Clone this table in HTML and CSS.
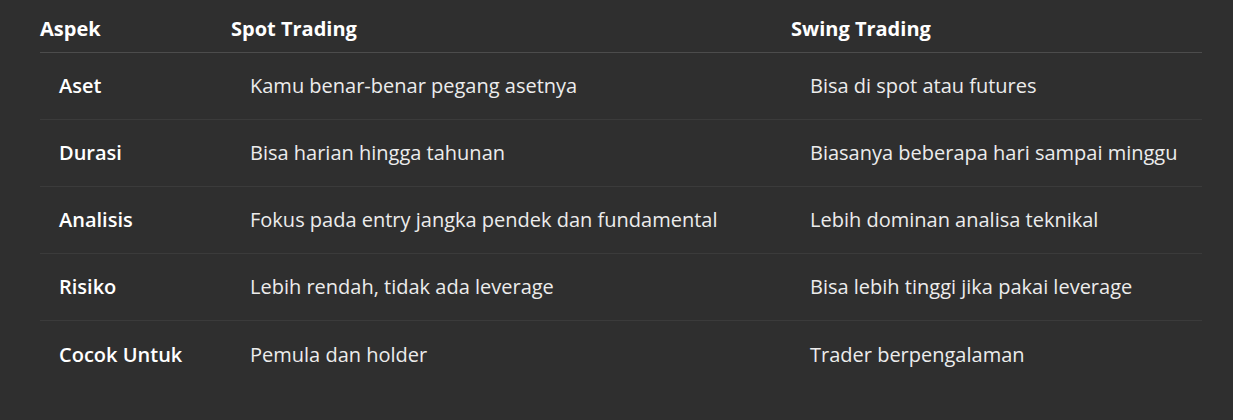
FILE: index.html
```html
<!DOCTYPE html>
<html>
<head>
<meta charset="utf-8">
<link rel="stylesheet" href="styles.css">
</head>
<body>
<div class="table">
  <div class="row head">
    <div class="c1">Aspek</div>
    <div class="c2">Spot Trading</div>
    <div class="c3">Swing Trading</div>
  </div>
  <div class="row">
    <div class="c1">Aset</div>
    <div class="c2">Kamu benar-benar pegang asetnya</div>
    <div class="c3">Bisa di spot atau futures</div>
  </div>
  <div class="row">
    <div class="c1">Durasi</div>
    <div class="c2">Bisa harian hingga tahunan</div>
    <div class="c3">Biasanya beberapa hari sampai minggu</div>
  </div>
  <div class="row">
    <div class="c1">Analisis</div>
    <div class="c2">Fokus pada entry jangka pendek dan fundamental</div>
    <div class="c3">Lebih dominan analisa teknikal</div>
  </div>
  <div class="row">
    <div class="c1">Risiko</div>
    <div class="c2">Lebih rendah, tidak ada leverage</div>
    <div class="c3">Bisa lebih tinggi jika pakai leverage</div>
  </div>
  <div class="row last">
    <div class="c1">Cocok Untuk</div>
    <div class="c2">Pemula dan holder</div>
    <div class="c3">Trader berpengalaman</div>
  </div>
</div>
</body>
</html>
```

FILE: styles.css
```css
html, body {
  margin: 0;
  background: #2f2f2f;
}
body {
  font-family: "Open Sans", "Noto Sans", sans-serif;
  font-size: 20px;
  line-height: 28px;
  color: #ececec;
  padding: 0 31px 0 40px;
}
.table {
  display: flex;
  flex-direction: column;
}
.row {
  display: flex;
  align-items: center;
  height: 67px;
  box-sizing: border-box;
  border-bottom: 1px solid #3b3b3b;
}
.row.last {
  border-bottom: none;
}
.row > div {
  padding-left: 19px;
  white-space: nowrap;
  box-sizing: border-box;
}
.c1 { width: 191px; font-weight: 600; color: #fff; }
.c2 { width: 560px; }
.c3 { flex: 1; }
.head {
  height: 53px;
  align-items: flex-start;
  padding-top: 15px;
  border-bottom: 1px solid #4c4c4c;
  font-weight: 700;
  color: #fff;
}
.head > div { padding-left: 0; font-weight: 700; }
```
